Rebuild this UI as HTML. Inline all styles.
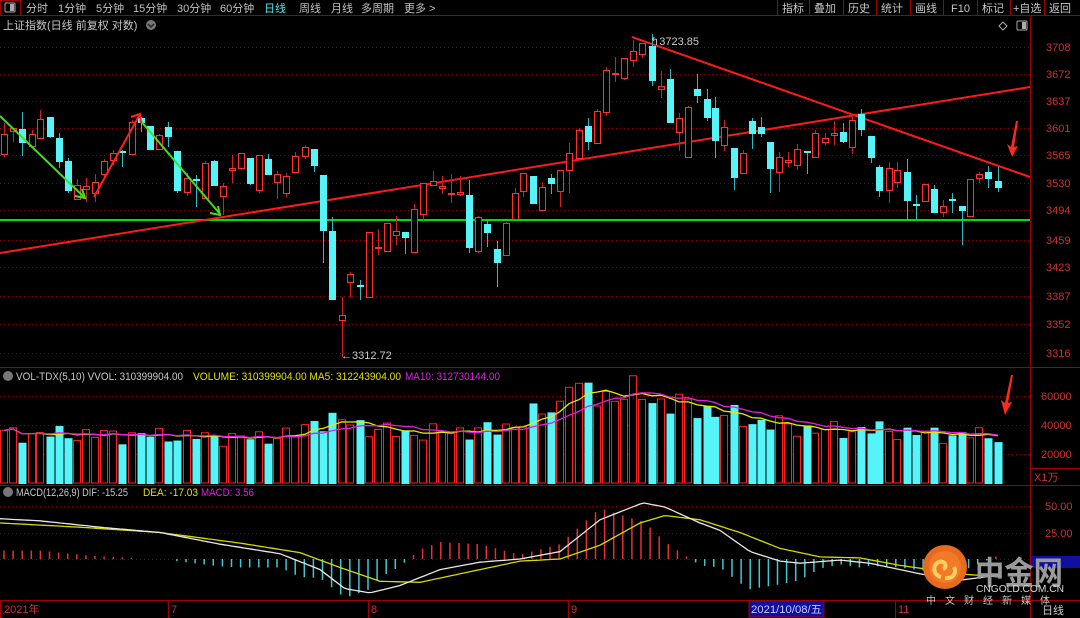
<!DOCTYPE html>
<html><head><meta charset="utf-8">
<style>
html,body{margin:0;padding:0;background:#000;width:1080px;height:618px;overflow:hidden}
svg{display:block}
text{font-family:"Liberation Sans","Noto Sans CJK SC",sans-serif;font-size:11px}
</style></head>
<body>
<svg id="s" width="1080" height="618" xmlns="http://www.w3.org/2000/svg">
<rect width="1080" height="618" fill="#000"/>
<line x1="0" y1="15.5" x2="1080" y2="15.5" stroke="#a00000"/>
<rect x="0.5" y="0.5" width="20" height="15" fill="none" stroke="#a00000"/>
<rect x="5" y="3" width="10" height="9" rx="1" fill="none" stroke="#aaa"/>
<rect x="10" y="4" width="4" height="7" fill="#aaa"/>
<g fill="#c0c0c0">
<text x="26" y="12">分时</text><text x="58" y="12">1分钟</text><text x="96" y="12">5分钟</text>
<text x="133" y="12">15分钟</text><text x="177" y="12">30分钟</text><text x="220" y="12">60分钟</text>
<text x="264" y="12" fill="#4fe6ee">日线</text><text x="299" y="12">周线</text><text x="331" y="12">月线</text>
<text x="361" y="12">多周期</text><text x="404" y="12">更多 &gt;</text>
</g>
<g stroke="#a00000" fill="none">
<line x1="777.5" y1="0" x2="777.5" y2="16"/><line x1="809.5" y1="0" x2="809.5" y2="16"/>
<line x1="843.5" y1="0" x2="843.5" y2="16"/><line x1="876.5" y1="0" x2="876.5" y2="16"/>
<line x1="910.5" y1="0" x2="910.5" y2="16"/><line x1="943.5" y1="0" x2="943.5" y2="16"/>
<line x1="977.5" y1="0" x2="977.5" y2="16"/><line x1="1010.5" y1="0" x2="1010.5" y2="16"/>
<line x1="1044.5" y1="0" x2="1044.5" y2="16"/>
</g>
<g fill="#c8c8c8">
<text x="782" y="12">指标</text><text x="814" y="12">叠加</text><text x="848" y="12">历史</text>
<text x="881" y="12">统计</text><text x="915" y="12">画线</text><text x="951" y="12">F10</text>
<text x="982" y="12">标记</text><text x="1013" y="12">+自选</text><text x="1049" y="12">返回</text>
</g>
<text x="3" y="29" fill="#c8c8c8">上证指数(日线 前复权 对数)</text>
<circle cx="151" cy="25" r="5" fill="#777"/><path d="M148 24l3 3 3-3" stroke="#222" fill="none" stroke-width="1.5"/>
<path d="M1003 22l4 4-4 4-4-4z" fill="none" stroke="#aaa"/>
<rect x="1017" y="21" width="10" height="9" rx="1" fill="none" stroke="#aaa"/><rect x="1022" y="22" width="4" height="7" fill="#aaa"/>
<line x1="1030.5" y1="16" x2="1030.5" y2="618" stroke="#a00000"/>
<line x1="0" y1="367.5" x2="1080" y2="367.5" stroke="#a00000"/>
<line x1="0" y1="485.5" x2="1080" y2="485.5" stroke="#a00000"/>
<line x1="0" y1="600.5" x2="1080" y2="600.5" stroke="#a00000"/>
<g id="grid" stroke="#8a0000" stroke-dasharray="1,3"></g>
<g id="axis" fill="#d03030"></g>
<line x1="0" y1="220" x2="1030" y2="220" stroke="#00e000" stroke-width="2"/>
<line x1="0" y1="253" x2="1030" y2="87" stroke="#ff1a1a" stroke-width="2"/>
<line x1="632" y1="37" x2="1030" y2="177" stroke="#ff1a1a" stroke-width="2"/>
<g id="cand"></g>
<g stroke-width="2" fill="none">
<line x1="0" y1="116" x2="84" y2="197" stroke="#40e020"/>
<path d="M75 196l10 2-3-9" stroke="#40e020"/>
<line x1="140" y1="120" x2="220" y2="214" stroke="#40e020"/>
<path d="M210 213l10 2-2-9" stroke="#40e020"/>
<line x1="94" y1="197" x2="140" y2="114" stroke="#ff2020"/>
<path d="M131 117l9-3 1 9" stroke="#ff2020"/>
</g>
<path d="M1016 121l-5 26-4-3 5 13 6-11-4 1 4-26z" fill="#ff2a1a"/>
<path d="M1011 375l-6 28-4-3 4 15 7-13-4 1 5-28z" fill="#ff2a1a"/>
<text x="650" y="45" fill="#c8c8c8">↰3723.85</text>
<text x="341" y="359" fill="#c8c8c8">←3312.72</text>
<circle cx="8" cy="376" r="5" fill="#777"/>
<text x="16" y="380" fill="#c8c8c8" textLength="167" lengthAdjust="spacingAndGlyphs">VOL-TDX(5,10) VVOL: 310399904.00</text>
<text x="193" y="380" fill="#e0e000" textLength="208" lengthAdjust="spacingAndGlyphs">VOLUME: 310399904.00 MA5: 312243904.00</text>
<text x="405" y="380" fill="#e020e0" textLength="95" lengthAdjust="spacingAndGlyphs">MA10: 312730144.00</text>
<g id="vol"></g>
<circle cx="8" cy="492" r="5" fill="#777"/>
<text x="16" y="496" fill="#c8c8c8" textLength="112" lengthAdjust="spacingAndGlyphs">MACD(12,26,9) DIF: -15.25</text>
<text x="143" y="496" fill="#e0e000" textLength="55" lengthAdjust="spacingAndGlyphs">DEA: -17.03</text>
<text x="201" y="496" fill="#e020e0" textLength="53" lengthAdjust="spacingAndGlyphs">MACD: 3.56</text>
<g id="macd"></g>
<rect x="1031" y="556" width="49" height="12" fill="#1010a0"/>
<line x1="1031" y1="468.5" x2="1080" y2="468.5" stroke="#a00000"/>
<text x="1034" y="481" fill="#d03030">X1万</text>
<g stroke="#a00000"><line x1="0.5" y1="600" x2="0.5" y2="618"/><line x1="168.5" y1="600" x2="168.5" y2="618"/><line x1="368.5" y1="600" x2="368.5" y2="618"/><line x1="568.5" y1="600" x2="568.5" y2="618"/><line x1="895.5" y1="600" x2="895.5" y2="618"/></g>
<g fill="#d03030"><text x="4" y="613">2021年</text><text x="171" y="613">7</text><text x="371" y="613">8</text><text x="571" y="613">9</text><text x="898" y="613">11</text></g>
<rect x="749" y="601" width="75" height="16" fill="#1010a0" stroke="#a00000"/>
<text x="751" y="613" fill="#c8c8ff" textLength="71" lengthAdjust="spacingAndGlyphs">2021/10/08/五</text>
<text x="1042" y="614" fill="#c8c8c8">日线</text>
<circle cx="945" cy="567" r="22" fill="#e86a20"/>
<circle cx="945" cy="567" r="16" fill="#f07a28"/>
<path d="M941 577c-8-2-9-12-2-15 6-2 9 5 4 7M945 578c8 1 12-5 9-11" stroke="#ffd060" stroke-width="4" fill="none"/>
<text x="975" y="584" fill="#9a9a9a" style="font-size:32px;font-weight:bold" textLength="88" lengthAdjust="spacingAndGlyphs">中金网</text>
<text x="976" y="592" fill="#d8d8d8" style="font-size:10px" textLength="88" lengthAdjust="spacingAndGlyphs">CNGOLD.COM.CN</text>
<text x="926" y="604" fill="#c8c8c8" style="font-size:10px;letter-spacing:9px">中文财经新媒体</text>
</svg>
<script>
var NS="http://www.w3.org/2000/svg";
function el(p,t,a){var e=document.createElementNS(NS,t);for(var k in a)e.setAttribute(k,a[k]);p.appendChild(e);return e;}
var grid=document.getElementById('grid'),axis=document.getElementById('axis');
[[3708,47],[3672,74],[3637,101],[3601,128],[3565,155],[3530,183],[3494,210],[3459,240],[3423,267],[3387,296],[3352,324],[3316,353]].forEach(function(a){
 el(grid,'line',{x1:0,y1:a[1]+.5,x2:1030,y2:a[1]+.5});
 var t=el(axis,'text',{x:1046,y:a[1]+4});t.textContent=a[0];
});
[[60000,396],[40000,425],[20000,454]].forEach(function(a){el(grid,'line',{x1:0,y1:a[1]+.5,x2:1030,y2:a[1]+.5});var t=el(axis,'text',{x:1041,y:a[1]+4});t.textContent=a[0];});
[["50.00",506],["25.00",533]].forEach(function(a){el(grid,'line',{x1:0,y1:a[1]+.5,x2:1030,y2:a[1]+.5});var t=el(axis,'text',{x:1045,y:a[1]+4});t.textContent=a[0];});
el(grid,'line',{x1:0,y1:559.5,x2:1030,y2:559.5});
var C=[[4,134,154,123,157,1],[13,128,131,128,142,1],[22,129,142,112,156,0],[32,134,146,130,147,1],[40,119,138,110,139,1],[50,117,136,117,138,0],[59,138,161,133,168,0],[68,161,190,158,193,0],[77,185,199,179,200,1],[86,186,189,178,202,1],[95,182,193,174,202,1],[104,161,174,159,177,1],[113,153,160,150,165,1],[122,151,152,150,167,0],[132,122,154,120,155,1],[141,118,122,117,132,0],[150,126,149,126,150,0],[159,135,149,134,150,1],[168,127,136,122,147,0],[177,151,190,151,193,0],[187,178,192,173,196,1],[196,179,180,175,207,0],[205,163,198,161,199,1],[214,161,185,160,186,0],[223,186,196,183,215,1],[232,168,170,155,183,1],[241,153,168,153,170,1],[250,158,183,158,185,0],[259,155,190,155,193,1],[268,159,174,154,175,0],[277,174,182,171,199,1],[286,176,193,173,197,1],[295,156,172,152,172,1],[305,147,156,145,159,1],[314,149,165,149,172,0],[323,175,230,175,263,0],[332,231,299,217,299,0],[342,315,320,297,357,1],[350,274,282,272,297,1],[360,285,286,280,300,0],[369,232,297,232,298,1],[378,247,248,229,255,1],[387,223,251,223,252,1],[396,231,235,216,245,1],[405,232,237,232,254,0],[414,209,252,204,252,1],[423,183,214,183,222,1],[433,181,185,171,185,1],[442,186,188,176,194,1],[451,193,194,174,203,1],[460,192,194,176,196,1],[469,195,247,180,253,0],[478,217,251,216,253,1],[487,224,232,221,247,0],[497,249,262,241,287,0],[506,223,255,222,256,1],[515,193,219,188,219,1],[523,173,191,173,197,1],[533,176,203,176,204,0],[542,187,210,182,210,1],[551,178,183,174,194,0],[560,170,191,170,207,1],[569,153,170,143,193,1],[579,130,158,128,160,1],[588,126,141,118,150,0],[597,111,143,109,143,1],[606,70,112,67,116,1],[615,73,74,57,82,1],[624,58,78,58,80,1],[633,51,60,40,67,1],[642,43,54,43,58,1],[652,46,80,34,86,0],[661,86,89,71,98,1],[670,79,122,69,122,0],[679,118,132,113,151,1],[688,107,157,106,158,1],[697,89,95,74,103,0],[707,99,117,89,121,0],[715,108,140,97,158,0],[724,127,145,120,151,1],[734,148,177,148,190,0],[743,153,173,150,174,1],[752,121,133,118,149,0],[761,127,133,117,137,0],[770,142,168,142,193,0],[779,157,172,152,192,1],[788,160,162,152,167,1],[797,149,165,144,170,1],[807,151,152,151,174,0],[815,133,157,130,158,1],[825,138,142,133,145,1],[834,133,135,121,145,1],[843,132,141,123,143,0],[852,120,147,117,154,1],[861,114,129,109,136,0],[871,136,157,136,163,0],[879,167,190,165,197,0],[889,168,190,162,203,1],[897,170,182,162,188,1],[907,172,200,159,221,0],[916,204,205,195,219,0],[925,184,201,184,202,1],[934,189,212,185,212,0],[943,206,212,200,217,1],[952,199,200,193,213,0],[962,206,210,206,245,0],[970,179,216,179,217,1],[979,174,178,172,183,1],[988,172,178,166,188,0],[998,181,187,167,192,0]];
var cg=document.getElementById('cand');
C.forEach(function(c){
 var col=c[5]?'#ff3030':'#54f4f8';
 el(cg,'line',{x1:c[0]+.5,y1:c[3],x2:c[0]+.5,y2:c[4],stroke:c[5]?'#d02020':'#30b8c0'});
 var h=Math.max(1,c[2]-c[1]);
 if(c[5]){el(cg,'rect',{x:c[0]-2.5,y:c[1]+.5,width:6,height:h,fill:'#000',stroke:col});}
 else el(cg,'rect',{x:c[0]-3,y:c[1],width:7,height:h+1,fill:col});
});
function interp(pts,x){for(var i=1;i<pts.length;i++){if(x<=pts[i][0]){var a=pts[i-1],b=pts[i];return a[1]+(b[1]-a[1])*(x-a[0])/(b[0]-a[0]);}}return pts[pts.length-1][1];}
var VP=[[0,34000],[150,33000],[250,31000],[300,34000],[315,44000],[345,42000],[400,34000],[500,37000],[540,48000],[560,54000],[570,64000],[600,60000],[640,62000],[660,56000],[700,52000],[740,44000],[780,40000],[820,36000],[870,37000],[950,33000],[1000,33000]];
var vg=document.getElementById('vol');var vols=[];
C.forEach(function(c,i){
 var v=interp(VP,c[0])*(1+0.13*Math.sin(i*2.3)+0.07*Math.cos(i*5.1));
 if(c[0]==569)v=66000;
 vols.push(v);
 var top=483-v*29/20000;
 if(c[5])el(vg,'rect',{x:c[0]-3.5,y:top,width:7,height:483-top,fill:'#000',stroke:'#ff2020'});
 else el(vg,'rect',{x:c[0]-3.5,y:top,width:8,height:484-top,fill:'#54f4f8'});
});
function ma(n,color){var d='';for(var i=0;i<vols.length;i++){var s=0,k=0;for(var j=Math.max(0,i-n+1);j<=i;j++){s+=vols[j];k++;}d+=(i?'L':'M')+C[i][0]+' '+(483-s/k*29/20000).toFixed(1);}el(vg,'path',{d:d,stroke:color,fill:'none','stroke-width':1.3});}
ma(5,'#e8e800');ma(10,'#e020e0');
var DIF=[[0,38],[40,36],[100,30],[160,25],[220,14],[280,5],[320,-10],[345,-28],[370,-32],[400,-25],[440,-10],[480,-3],[520,0],[560,7],[600,37],[643,53],[665,49],[700,34],[720,27],[750,7],[780,-2],[800,-4],[840,-1],[870,-4],[920,-14],[960,-20],[1000,-15]];
var DEA=[[0,34],[80,30],[160,25],[240,15],[300,6],[340,-8],[380,-21],[420,-22],[480,-10],[520,-2],[560,0],[600,13],[640,34],[665,41],[700,37],[740,25],[780,10],[820,2],[860,1],[900,-6],[960,-14],[1000,-17]];
var mg=document.getElementById('macd');
for(var x=4;x<1000;x+=9.1){var h=2*(interp(DIF,x)-interp(DEA,x))*1.06;if(Math.abs(h)<1)continue;
 el(mg,'line',{x1:x.toFixed(1),y1:559,x2:x.toFixed(1),y2:(559-h).toFixed(1),stroke:h>0?'#e83030':'#40c8d0','stroke-width':1.5});}
function line(P,col){var d='';for(var x=0;x<=1000;x+=4){d+=(x?'L':'M')+x+' '+(559-interp(P,x)*1.06).toFixed(1);}el(mg,'path',{d:d,stroke:col,fill:'none','stroke-width':1.3});}
line(DEA,'#d8d800');line(DIF,'#e8e8e8');
</script>
</body></html>
